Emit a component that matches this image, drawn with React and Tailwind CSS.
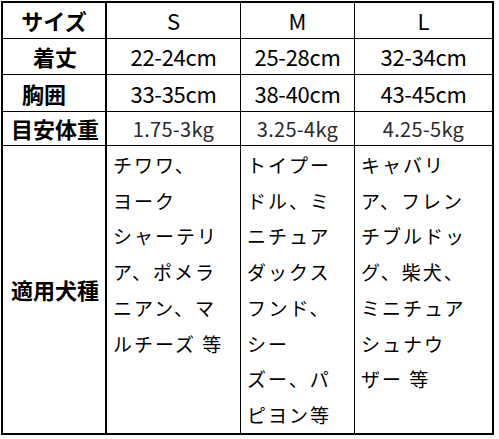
import React from "react";

const sizes = ["S", "M", "L"];

const rows = [
  { label: "着丈", vals: ["22-24cm", "25-28cm", "32-34cm"] },
  { label: "胸囲", vals: ["33-35cm", "38-40cm", "43-45cm"], shift: true },
  { label: "目安体重", vals: ["1.75-3kg", "3.25-4kg", "4.25-5kg"], light: true },
];

const breeds = [
  ["チワワ、", "ヨーク", "シャーテリ", "ア、ポメラ", "ニアン、マ", "ルチーズ 等"],
  ["トイプー", "ドル、ミ", "ニチュア", "ダックス", "フンド、", "シー", "ズー、パ", "ピヨン等"],
  ["キャバリ", "ア、フレン", "チブルドッ", "グ、柴犬、", "ミニチュア", "シュナウ", "ザー 等"],
];

const colBorder = ["border-r-2", "border-r", "border-r", ""];

function App() {
  return (
    <div className="bg-white min-h-screen pt-[1px] pl-[1px] font-['Noto_Sans_CJK_JP',sans-serif] text-black">
      <div className="w-[493px] border-2 border-black grid grid-cols-[104px_134px_114px_137px] grid-rows-[36px_36px_37px_34px_287px]">
        {/* header */}
        <div className={`${colBorder[0]} border-b border-black flex items-center justify-center text-[22px] font-bold`}>
          サイズ
        </div>
        {sizes.map((s, i) => (
          <div
            key={s}
            className={`${colBorder[i + 1]} border-b border-black flex items-center justify-center text-[22px]`}
          >
            {s}
          </div>
        ))}

        {rows.map((r) => (
          <React.Fragment key={r.label}>
            <div
              className={`${colBorder[0]} border-b border-black flex items-center justify-center text-[22px] font-bold ${r.shift ? "pr-[20px]" : "pl-[2px]"}`}
            >
              {r.label}
            </div>
            {r.vals.map((v, i) => (
              <div
                key={v}
                className={`${colBorder[i + 1]} border-b border-black flex items-center justify-center ${r.light ? "text-[20px] text-[#2a2a2a] tracking-[0.3px]" : "text-[22px] tracking-[-0.3px]"}`}
              >
                {v}
              </div>
            ))}
          </React.Fragment>
        ))}

        {/* last row */}
        <div className={`${colBorder[0]} border-black flex items-center justify-center pl-[2px] text-[22px] font-bold`}>
          適用犬種
        </div>
        {breeds.map((lines, i) => (
          <div
            key={i}
            className={`${colBorder[i + 1]} border-black pl-[6px] pt-[1px] text-[19px] tracking-[2px] leading-[35.7px]`}
          >
            {lines.map((t) => (
              <div key={t} className="whitespace-pre">
                {t}
              </div>
            ))}
          </div>
        ))}
      </div>
    </div>
  );
}

export default App;
